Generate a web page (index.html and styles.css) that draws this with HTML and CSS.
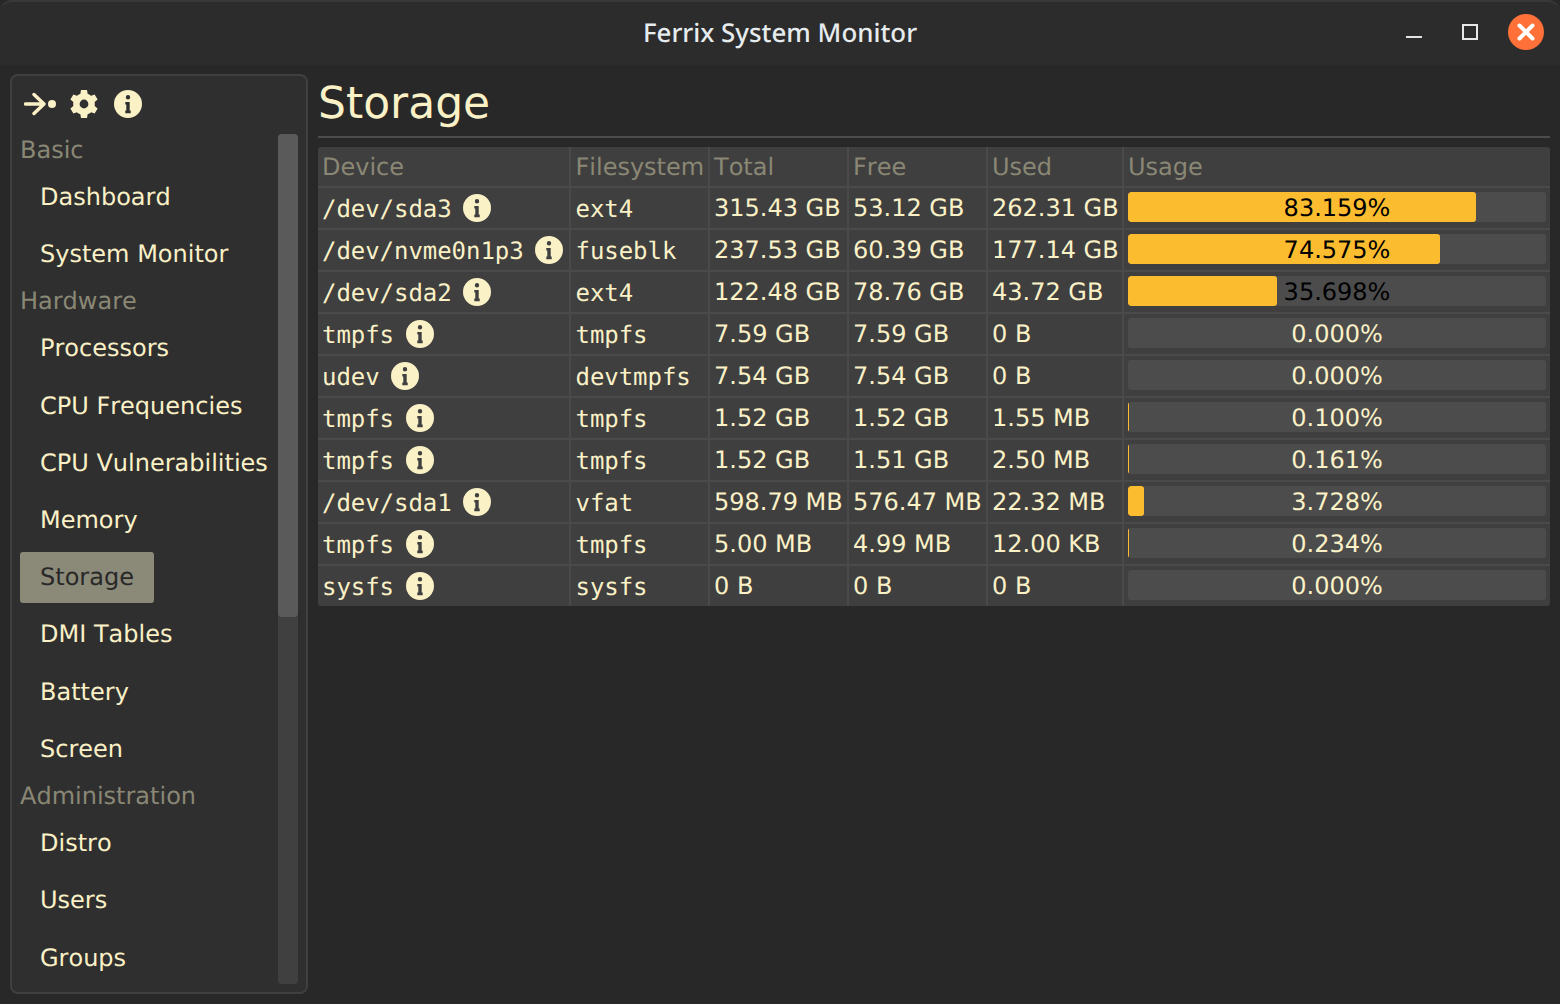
FILE: index.html
```html
<!DOCTYPE html>
<html lang="en">
<head>
<meta charset="utf-8">
<title>Ferrix System Monitor</title>
<link rel="stylesheet" href="styles.css">
</head>
<body>
<svg class="defs" width="0" height="0" aria-hidden="true">
  <symbol id="i-info" viewBox="0 0 28 28">
    <path fill-rule="evenodd" d="M14 0a14 14 0 1 0 0 28a14 14 0 1 0 0-28zM14 5a2.2 2.2 0 1 1 0 4.4a2.2 2.2 0 1 1 0-4.4zM11.3 12h4.4v8.6h1v2.7h-5.4v-2.7h1v-6h-1z"/>
  </symbol>
  <symbol id="i-gear" viewBox="0 0 28 28">
    <circle cx="14" cy="14" r="7.6" fill="none" stroke="currentColor" stroke-width="6.4"/>
    <path d="M11 0h6l.8 5h-7.6z"/>
    <path d="M11 0h6l.8 5h-7.6z" transform="rotate(60 14 14)"/>
    <path d="M11 0h6l.8 5h-7.6z" transform="rotate(120 14 14)"/>
    <path d="M11 0h6l.8 5h-7.6z" transform="rotate(180 14 14)"/>
    <path d="M11 0h6l.8 5h-7.6z" transform="rotate(240 14 14)"/>
    <path d="M11 0h6l.8 5h-7.6z" transform="rotate(300 14 14)"/>
  </symbol>
</svg>
<div class="window">
  <header class="titlebar">
    <div class="title">Ferrix System Monitor</div>
    <div class="controls">
      <span class="ctl-min"></span>
      <span class="ctl-max"></span>
      <span class="ctl-close">
        <svg width="20" height="20" viewBox="0 0 20 20"><path d="M3.5 3.5L16.5 16.5M16.5 3.5L3.5 16.5" stroke="#fff" stroke-width="4" stroke-linecap="round" fill="none"/></svg>
      </span>
    </div>
  </header>
  <div class="body">
    <aside class="sidebar">
      <div class="toolbar">
        <svg class="ic-arrow" width="32" height="28" viewBox="0 0 32 28"><path d="M1.5 14H20M10 4.5L20 14L10 23.5" fill="none" stroke="currentColor" stroke-width="3.4" stroke-linecap="round" stroke-linejoin="round"/><circle cx="28" cy="14" r="4" fill="currentColor"/></svg>
        <svg class="ic" width="28" height="28"><use href="#i-gear"/></svg>
        <svg class="ic" width="28" height="28"><use href="#i-info"/></svg>
      </div>
      <div class="nav-wrap">
        <nav class="nav">
          <div class="nav-label">Basic</div>
          <a class="nav-item">Dashboard</a>
          <a class="nav-item">System Monitor</a>
          <div class="nav-label">Hardware</div>
          <a class="nav-item">Processors</a>
          <a class="nav-item">CPU Frequencies</a>
          <a class="nav-item">CPU Vulnerabilities</a>
          <a class="nav-item">Memory</a>
          <a class="nav-item active">Storage</a>
          <a class="nav-item">DMI Tables</a>
          <a class="nav-item">Battery</a>
          <a class="nav-item">Screen</a>
          <div class="nav-label">Administration</div>
          <a class="nav-item">Distro</a>
          <a class="nav-item">Users</a>
          <a class="nav-item">Groups</a>
        </nav>
        <div class="scroll"><div class="thumb"></div></div>
      </div>
    </aside>
    <main class="main">
      <h1 class="heading">Storage</h1>
      <div class="rule"></div>
      <div class="table">
        <div class="th">Device</div><div class="th">Filesystem</div><div class="th">Total</div><div class="th">Free</div><div class="th">Used</div><div class="th">Usage</div>

        <div class="td dev"><span class="mono">/dev/sda3</span><svg class="ic" width="28" height="28"><use href="#i-info"/></svg></div><div class="td mono">ext4</div><div class="td">315.43 GB</div><div class="td">53.12 GB</div><div class="td">262.31 GB</div>
        <div class="td usage"><div class="bar"><div class="fill" style="width:83.159%"></div><span class="pct dark">83.159%</span></div></div>

        <div class="td dev"><span class="mono">/dev/nvme0n1p3</span><svg class="ic" width="28" height="28"><use href="#i-info"/></svg></div><div class="td mono">fuseblk</div><div class="td">237.53 GB</div><div class="td">60.39 GB</div><div class="td">177.14 GB</div>
        <div class="td usage"><div class="bar"><div class="fill" style="width:74.575%"></div><span class="pct dark">74.575%</span></div></div>

        <div class="td dev"><span class="mono">/dev/sda2</span><svg class="ic" width="28" height="28"><use href="#i-info"/></svg></div><div class="td mono">ext4</div><div class="td">122.48 GB</div><div class="td">78.76 GB</div><div class="td">43.72 GB</div>
        <div class="td usage"><div class="bar"><div class="fill" style="width:35.698%"></div><span class="pct dark">35.698%</span></div></div>

        <div class="td dev"><span class="mono">tmpfs</span><svg class="ic" width="28" height="28"><use href="#i-info"/></svg></div><div class="td mono">tmpfs</div><div class="td">7.59 GB</div><div class="td">7.59 GB</div><div class="td">0 B</div>
        <div class="td usage"><div class="bar"><span class="pct">0.000%</span></div></div>

        <div class="td dev"><span class="mono">udev</span><svg class="ic" width="28" height="28"><use href="#i-info"/></svg></div><div class="td mono">devtmpfs</div><div class="td">7.54 GB</div><div class="td">7.54 GB</div><div class="td">0 B</div>
        <div class="td usage"><div class="bar"><span class="pct">0.000%</span></div></div>

        <div class="td dev"><span class="mono">tmpfs</span><svg class="ic" width="28" height="28"><use href="#i-info"/></svg></div><div class="td mono">tmpfs</div><div class="td">1.52 GB</div><div class="td">1.52 GB</div><div class="td">1.55 MB</div>
        <div class="td usage"><div class="bar"><div class="fill thin"></div><span class="pct">0.100%</span></div></div>

        <div class="td dev"><span class="mono">tmpfs</span><svg class="ic" width="28" height="28"><use href="#i-info"/></svg></div><div class="td mono">tmpfs</div><div class="td">1.52 GB</div><div class="td">1.51 GB</div><div class="td">2.50 MB</div>
        <div class="td usage"><div class="bar"><div class="fill thin"></div><span class="pct">0.161%</span></div></div>

        <div class="td dev"><span class="mono">/dev/sda1</span><svg class="ic" width="28" height="28"><use href="#i-info"/></svg></div><div class="td mono">vfat</div><div class="td">598.79 MB</div><div class="td">576.47 MB</div><div class="td">22.32 MB</div>
        <div class="td usage"><div class="bar"><div class="fill" style="width:3.728%"></div><span class="pct">3.728%</span></div></div>

        <div class="td dev"><span class="mono">tmpfs</span><svg class="ic" width="28" height="28"><use href="#i-info"/></svg></div><div class="td mono">tmpfs</div><div class="td">5.00 MB</div><div class="td">4.99 MB</div><div class="td">12.00 KB</div>
        <div class="td usage"><div class="bar"><div class="fill thin"></div><span class="pct">0.234%</span></div></div>

        <div class="td dev"><span class="mono">sysfs</span><svg class="ic" width="28" height="28"><use href="#i-info"/></svg></div><div class="td mono">sysfs</div><div class="td">0 B</div><div class="td">0 B</div><div class="td">0 B</div>
        <div class="td usage"><div class="bar"><span class="pct">0.000%</span></div></div>
      </div>
    </main>
  </div>
</div>
</body>
</html>
```

FILE: styles.css
```css
* { box-sizing: border-box; }
html, body { margin: 0; height: 100%; background: #2c2c2c; overflow: hidden; }
body { font-family: "DejaVu Sans", sans-serif; font-size: 24px; line-height: 31.2px; color: #fbf1c7; text-rendering: geometricPrecision; font-kerning: none; }
.defs { position: absolute; }
.window { height: 1004px; display: flex; flex-direction: column; background: #282828; }

.titlebar { position: relative; height: 65px; flex: none; display: flex; align-items: center; justify-content: center; background: #2c2c2c; border-top: 2px solid #383838; border-radius: 12px 12px 0 0; }
.title { font-family: "Noto Sans", sans-serif; font-weight: 500; font-size: 25.9px; color: #e6ebee; margin-top: -2px; font-kerning: normal; }
.controls { position: absolute; right: 16px; top: 12px; display: flex; align-items: center; height: 36px; }
.ctl-min { width: 16px; height: 2px; background: #e4e4e4; margin-right: 40px; margin-top: 10px; }
.ctl-max { width: 16px; height: 16px; border: 2px solid #e8e8e8; margin-right: 30px; }
.ctl-close { width: 36px; height: 36px; border-radius: 50%; background: #ff7139; display: flex; align-items: center; justify-content: center; }

.body { flex: 1; min-height: 0; display: flex; padding: 9px 10px 10px; gap: 10px; }

.sidebar { width: 298px; flex: none; display: flex; flex-direction: column; background: #2f2f2f; border: 2px solid #404040; border-radius: 8px; padding: 14px 8px 8px 8px; }
.toolbar { display: flex; gap: 16px; height: 28px; padding-left: 4px; color: #fbf1c7; margin-bottom: 16px; }
.ic { display: block; fill: #fbf1c7; color: #fbf1c7; flex: none; }
.ic-arrow { display: block; flex: none; margin-right: -2px; }

.nav-wrap { flex: 1; min-height: 0; display: flex; }
.nav { flex: 1; min-width: 0; overflow: hidden; display: flex; flex-direction: column; align-items: flex-start; gap: 6px; padding-top: 0.55px; }
.nav-label { color: #8a8775; white-space: nowrap; flex: none; }
.nav-item { flex: none; padding: 10px 20px; border-radius: 3px; white-space: nowrap; }
.nav-item.active { background: #8b8a78; color: #282828; }

.scroll { width: 20px; flex: none; background: #404040; border-radius: 4px; }
.thumb { height: 483px; background: #5a5a5a; border-radius: 4px; }

.main { flex: 1; min-width: 0; padding-top: 0; }
.heading { margin: 0; padding-top: 1px; font-size: 44px; line-height: 57px; font-weight: 400; height: 62px; }
.rule { height: 2px; background: #4c4c4c; margin-bottom: 9px; }

.table { display: grid; grid-template-columns: 251px 137px 137px 137px 134px 1fr; grid-template-rows: 39px repeat(10, 40px); gap: 2px; background: #4a4a4a; border-radius: 4px; overflow: hidden; }
.th, .td { background: #3f3f3f; padding: 2px 4px 0; display: flex; align-items: center; white-space: nowrap; }
.th { color: #8a8775; padding-top: 3px; }
.table > :nth-child(6n+2) { padding-left: 4.5px; }
.mono { font-family: "DejaVu Sans Mono", monospace; padding-top: 4px; letter-spacing: -0.05px; }
.td.mono { padding-top: 4px; }
.dev { gap: 11.6px; padding-top: 0; }
.dev .ic { fill: #fbf1c7; }
.usage { padding: 4px; align-items: flex-start; }

.bar { position: relative; width: 100%; height: 30px; background: #4c4c4c; border-radius: 3px; display: flex; align-items: center; justify-content: center; overflow: hidden; }
.fill { position: absolute; left: 0; top: 0; bottom: 0; background: #fbbd2f; border-radius: 3px; }
.fill.thin { width: 1px; border-radius: 0; }
.pct { position: relative; padding-top: 4px; }
.pct.dark { color: #000; }
```
